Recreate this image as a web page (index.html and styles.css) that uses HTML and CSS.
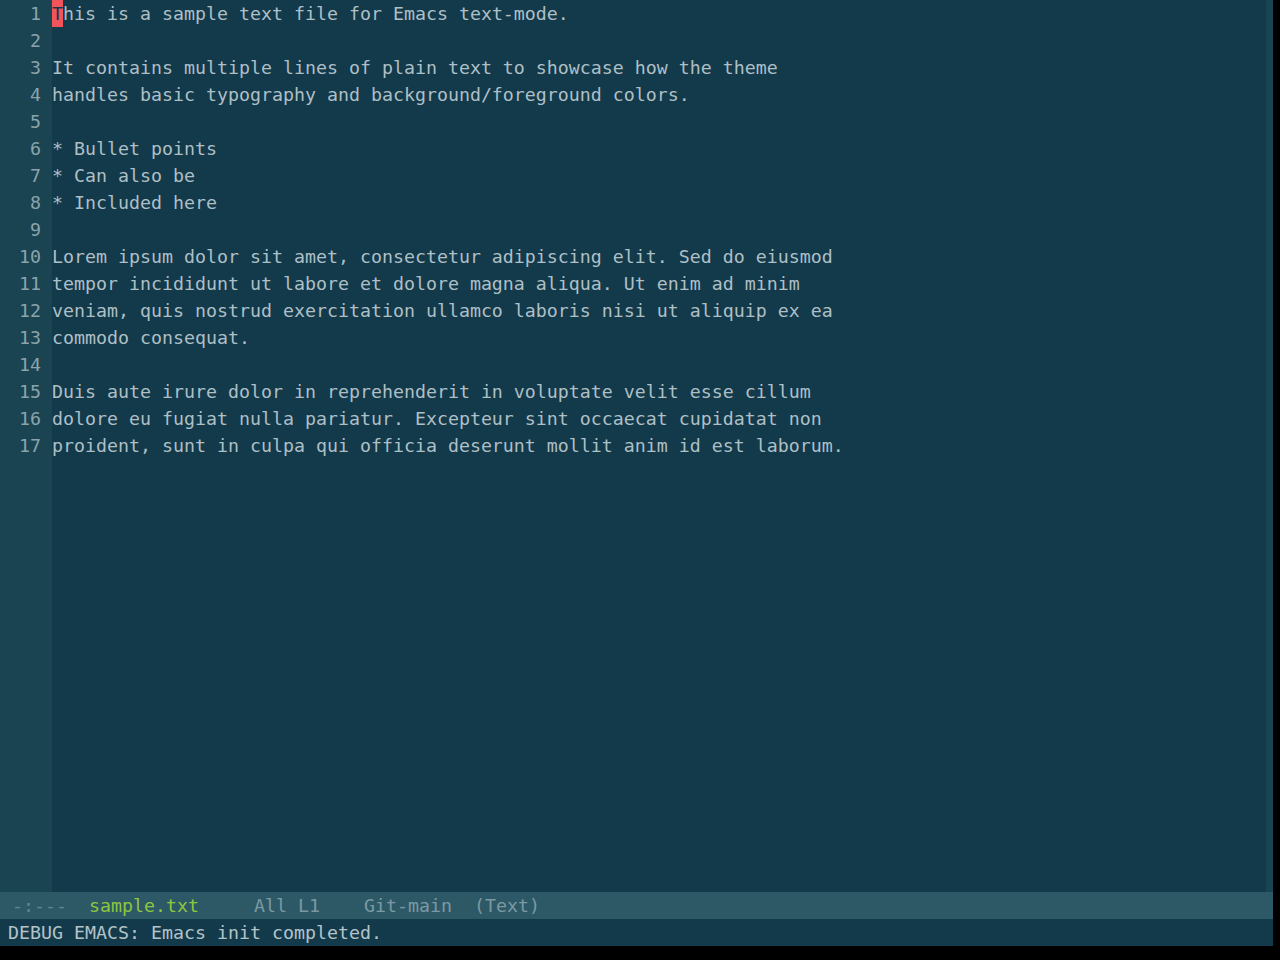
FILE: index.html
```html
<!DOCTYPE html>
<html>
<head>
<meta charset="utf-8">
<link rel="stylesheet" href="styles.css">
</head>
<body>
<div class="frame">
  <div class="window">
    <div class="gutter">
      <div class="ln">1</div>
      <div class="ln">2</div>
      <div class="ln">3</div>
      <div class="ln">4</div>
      <div class="ln">5</div>
      <div class="ln">6</div>
      <div class="ln">7</div>
      <div class="ln">8</div>
      <div class="ln">9</div>
      <div class="ln">10</div>
      <div class="ln">11</div>
      <div class="ln">12</div>
      <div class="ln">13</div>
      <div class="ln">14</div>
      <div class="ln">15</div>
      <div class="ln">16</div>
      <div class="ln">17</div>
    </div>
    <div class="text">
      <div class="line"><span class="cursor">T</span>his is a sample text file for Emacs text-mode.</div>
      <div class="line"> </div>
      <div class="line">It contains multiple lines of plain text to showcase how the theme</div>
      <div class="line">handles basic typography and background/foreground colors.</div>
      <div class="line"> </div>
      <div class="line">* Bullet points</div>
      <div class="line">* Can also be</div>
      <div class="line">* Included here</div>
      <div class="line"> </div>
      <div class="line">Lorem ipsum dolor sit amet, consectetur adipiscing elit. Sed do eiusmod</div>
      <div class="line">tempor incididunt ut labore et dolore magna aliqua. Ut enim ad minim</div>
      <div class="line">veniam, quis nostrud exercitation ullamco laboris nisi ut aliquip ex ea</div>
      <div class="line">commodo consequat.</div>
      <div class="line"> </div>
      <div class="line">Duis aute irure dolor in reprehenderit in voluptate velit esse cillum</div>
      <div class="line">dolore eu fugiat nulla pariatur. Excepteur sint occaecat cupidatat non</div>
      <div class="line">proident, sunt in culpa qui officia deserunt mollit anim id est laborum.</div>
    </div>
    <div class="fringe"></div>
  </div>
  <div class="modeline"><span class="dim">-:---</span>  <span class="buf">sample.txt</span>     <span class="info">All L1</span>    <span class="info">Git-main</span>  <span class="info">(Text)</span></div>
  <div class="echo">DEBUG EMACS: Emacs init completed.</div>
</div>
</body>
</html>
```
FILE: styles.css
```css
html, body {
  margin: 0;
  padding: 0;
  background: #000000;
}
body {
  width: 1280px;
  height: 960px;
  overflow: hidden;
  font-family: "DejaVu Sans Mono", monospace;
  font-size: 18.27px;
  line-height: 27px;
}
.frame {
  width: 1273px;
  height: 946px;
  display: flex;
  flex-direction: column;
  background: #133a4a;
}
.window {
  flex: 1;
  display: flex;
  min-height: 0;
}
.gutter {
  width: 52px;
  flex: none;
  background: #1a4452;
  color: #8ba3ab;
  text-align: right;
  box-sizing: border-box;
  padding-right: 11px;
}
.ln,
.line {
  height: 27px;
  box-sizing: border-box;
  padding-top: 1px;
  line-height: 26px;
}
.text {
  flex: 1;
  color: #aebfc6;
}
.line {
  white-space: pre;
}
.cursor {
  background: #f2545b;
  color: #133a4a;
  display: inline-block;
  vertical-align: top;
  height: 27px;
  margin-top: -1px;
  padding-top: 1px;
  box-sizing: border-box;
  line-height: 26px;
}
.fringe {
  width: 7px;
  flex: none;
  background: #1a4452;
}
.modeline {
  height: 27px;
  flex: none;
  box-sizing: border-box;
  padding-top: 1px;
  line-height: 26px;
  background: #2d5966;
  color: #7a99a3;
  white-space: pre;
  padding-left: 12px;
}
.modeline .dim {
  color: #5f8793;
}
.modeline .buf {
  color: #8cc63f;
}
.echo {
  height: 27px;
  flex: none;
  box-sizing: border-box;
  padding-top: 1px;
  line-height: 26px;
  background: #133a4a;
  color: #b3c3c9;
  white-space: pre;
  padding-left: 8px;
}
```
